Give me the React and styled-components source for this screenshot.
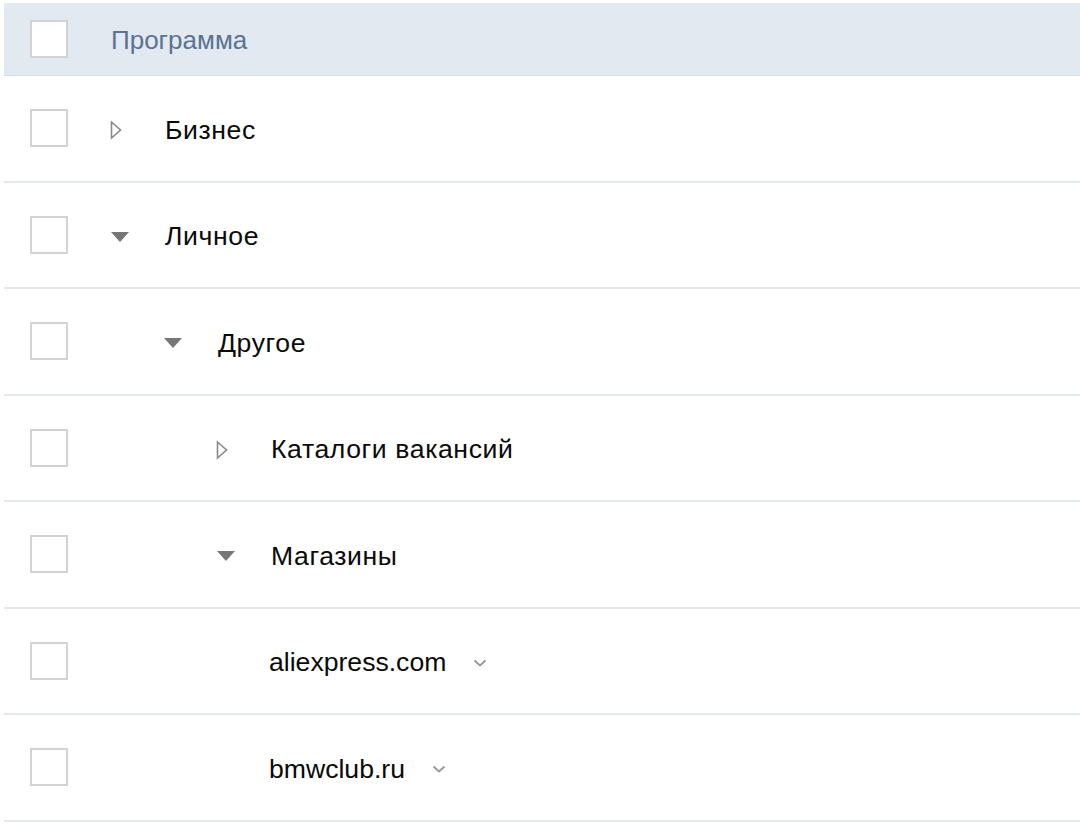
import React from "react";
import styled, { createGlobalStyle } from "styled-components";

const Global = createGlobalStyle`
  html, body { margin: 0; padding: 0; background: #ffffff; }
  body { font-family: "Liberation Sans", Arial, Helvetica, sans-serif; }
`;

const Table = styled.div`
  padding: 3px 0 0 4px;
  display: flex;
  flex-direction: column;
`;

const HeaderRow = styled.div`
  height: 72px;
  background: #e3e9f1;
  border-bottom: 1px dotted #cfd5dd;
  display: flex;
  align-items: center;
  padding-left: 26px;
`;

const Row = styled.div`
  height: 104.5px;
  border-bottom: 2px solid #e4e8ee;
  display: flex;
  align-items: center;
  padding-left: 26px;
`;

const Check = styled.div`
  width: 34px;
  height: 34px;
  border: 2px solid #d2d2d2;
  background: #fff;
  flex: none;
`;

const HeaderLabel = styled.div`
  margin-left: 43px;
  padding-top: 2px;
  font-size: 26px;
  color: #5a7393;
`;

const Cell = styled.div`
  display: flex;
  align-items: center;
  padding-top: 4px;
  margin-left: ${(p) => 42 + p.$level * 53}px;
`;

const ToggleBox = styled.span`
  width: 55px;
  flex: none;
  display: flex;
  align-items: center;
`;

const Label = styled.span`
  font-size: 26.6px;
  color: #0a0a0a;
  line-height: 1;
  letter-spacing: ${(p) => (p.$cyr ? "0.6px" : "0")};
`;

const Chevron = styled.svg`
  margin-left: 27px;
  flex: none;
`;

const ClosedArrow = () => (
  <svg width="12" height="20" viewBox="0 0 12 20">
    <path d="M1.5 2 L10.5 10 L1.5 18 Z" fill="none" stroke="#8a8a8a" strokeWidth="1.6" strokeLinejoin="miter" />
  </svg>
);

const OpenArrow = () => (
  <svg width="20" height="12" viewBox="0 0 20 12">
    <path d="M1 1 H19 L10 11 Z" fill="#777777" />
  </svg>
);

const rows = [
  { label: "Бизнес", level: 0, state: "closed", cyr: true },
  { label: "Личное", level: 0, state: "open", cyr: true },
  { label: "Другое", level: 1, state: "open", cyr: true },
  { label: "Каталоги вакансий", level: 2, state: "closed", cyr: true },
  { label: "Магазины", level: 2, state: "open", cyr: true },
  { label: "aliexpress.com", level: 3, state: "leaf" },
  { label: "bmwclub.ru", level: 3, state: "leaf" },
];

export default function App() {
  return (
    <>
      <Global />
      <Table>
        <HeaderRow>
          <Check />
          <HeaderLabel>Программа</HeaderLabel>
        </HeaderRow>
        {rows.map((r) => (
          <Row key={r.label}>
            <Check />
            <Cell $level={r.level}>
              {r.state !== "leaf" && (
                <ToggleBox>{r.state === "open" ? <OpenArrow /> : <ClosedArrow />}</ToggleBox>
              )}
              <Label $cyr={r.cyr}>{r.label}</Label>
              {r.state === "leaf" && (
                <Chevron width="14" height="8" viewBox="0 0 14 8">
                  <path d="M1.5 1.5 L7 6.5 L12.5 1.5" fill="none" stroke="#9a9a9a" strokeWidth="2" />
                </Chevron>
              )}
            </Cell>
          </Row>
        ))}
      </Table>
    </>
  );
}
